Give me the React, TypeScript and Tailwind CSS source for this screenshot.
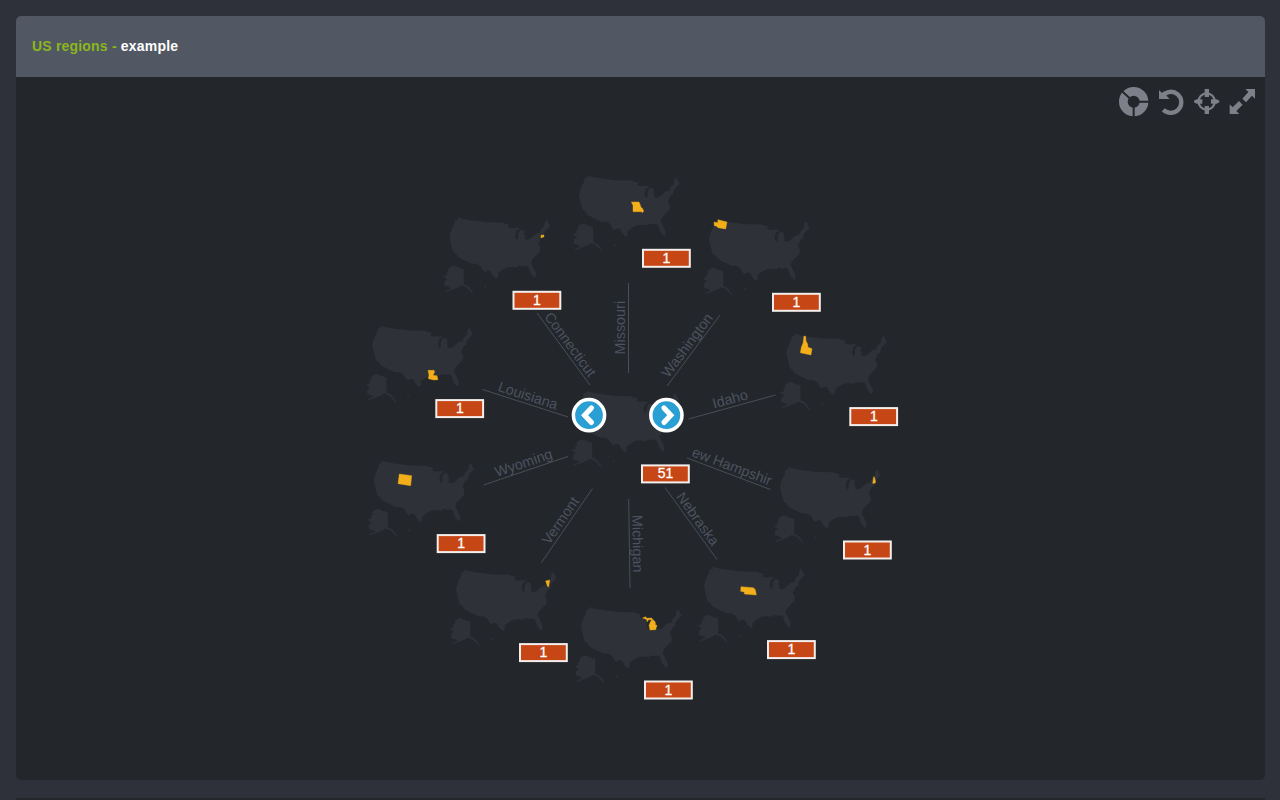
import React from "react";

type Region = {
  name: string;
  label: string;
  dx: number;
  dy: number;
  line: [number, number, number, number];
  shape: string;
  origin: [number, number];
};

const LAND =
  "M84,32 L86,33 L90,36 L120,42 L170,48 L218,49 L222,52 L238,55 L232,62 L242,66 L251,65 L264,65 L270,67 L260,73 L256,82 L256,94 L260,101 L264,97 L264,82 L269,73 L277,70 L284,77 L281,86 L285,88 L283,98 L291,101 L300,98 L308,90 L318,82 L329,80 L333,68 L342,61 L344,47 L348,41 L353,43 L355,53 L361,57 L353,66 L344,75 L341,84 L341,90 L332,95 L329,104 L324,112 L330,121 L330,136 L318,148 L307,160 L303,171 L311,187 L318,202 L317,213 L313,215 L304,206 L299,196 L296,184 L288,179 L276,181 L267,178 L262,184 L246,182 L232,183 L217,191 L205,200 L203,216 L196,216 L187,206 L181,194 L172,193 L165,198 L158,192 L151,179 L140,173 L125,173 L98,160 L83,152 L78,143 L69,137 L64,118 L58,93 L62,75 L72,55 L76,39 L83,42 Z";
const ALASKA =
  "M51,186 L60,179 L70,176 L79,181 L98,187 L98,232 L107,235 L115,242 L126,258 L124,261 L112,247 L104,240 L90,235 L82,241 L67,247 L44,256 L41,253 L60,245 L52,240 L41,237 L39,230 L42,222 L49,217 L40,212 L37,207 L48,205 L46,198 L52,194 Z M31,209 l4,-1 l1,3 z M133,221 l4,1 l-2,3 z M146,226 l5,2 l-3,2 z M161,235 l4,4 l-1,6 l-4,-2 z";

const REGIONS: Region[] = [
  { name: "Missouri", label: "Missouri", dx: 0, dy: 0, line: [628.5, 373, 628.5, 283], origin: [560, 165], shape: "M214,111 L237,111 L240,118 L243,127 L248,131 L251,138 L247,143 L244,140 L219,140 L219,121 Z" },
  { name: "Washington", label: "Washington", dx: 130, dy: 44, line: [667, 386, 720, 315], origin: [700, 210], shape: "M42,36 L53,38 L54,29 L81,36 L77,57 L54,53 L50,49 L43,47 Z" },
  { name: "Idaho", label: "Idaho", dx: 207.3, dy: 158.3, line: [688.5, 419, 775.5, 395], origin: [700, 210], shape: "M312,378 L317,379 L318,393 L323,402 L324,412 L336,416 L333,435 L301,428 L304,412 L309,400 Z" },
  { name: "New Hampshire", label: "ew Hampshir", dx: 201, dy: 291.7, line: [687, 458, 770.5, 489.5], origin: [660, 430], shape: "M641,140 L643,141 L647,155 L645,160 L638,160 Z" },
  { name: "Nebraska", label: "Nebraska", dx: 125, dy: 391.3, line: [665, 487.5, 717, 559.5], origin: [660, 430], shape: "M243,470 L280,473 L286,479 L289,495 L253,492 L253,486 L242,484 Z" },
  { name: "Michigan", label: "Michigan", dx: 2, dy: 431.7, line: [628.7, 499, 630, 588], origin: [560, 480], shape: "M248,414 L257,410 L260,415 L275,414 L279,419 L266,419 L262,425 L259,418 Z M274,420 L281,421 L286,427 L286,434 L291,436 L287,449 L270,450 L267,436 Z" },
  { name: "Vermont", label: "Vermont", dx: -123, dy: 394.3, line: [541.5, 562.5, 592.5, 488.5], origin: [360, 440], shape: "M557,423 L569,420 L566,441 L562,438 Z" },
  { name: "Wyoming", label: "Wyoming", dx: -205.3, dy: 285.3, line: [483.5, 485, 568, 456.5], origin: [360, 440], shape: "M118,102 L155,107 L152,137 L114,131 Z" },
  { name: "Louisiana", label: "Louisiana", dx: -206.7, dy: 150.3, line: [482.5, 389.5, 568, 417], origin: [360, 310], shape: "M204,181 L222,181 L224,185 L219,196 L231,197 L234,209 L222,210 L205,206 L207,195 Z" },
  { name: "Connecticut", label: "Connecticut", dx: -129.5, dy: 42, line: [537, 313, 590, 385], origin: [430, 210], shape: "M333,76 L342,75 L342,80 L333,84 Z" },
];

function UsMap({ dx, dy }: { dx: number; dy: number }) {
  return (
    <g transform={`translate(${559.6 + dx} ${164.2 + dy}) scale(0.33333)`} className="fill-[#2f3139]">
      <path d={LAND} />
      <path d={ALASKA} transform="translate(3 2)" />
    </g>
  );
}

function Badge({ dx, dy, value }: { dx: number; dy: number; value: number }) {
  const x = 642 + dx;
  const y = 248.8 + dy;
  return (
    <g>
      <rect x={x + 1} y={y + 1} width={46.8} height={17} strokeWidth={2} className="fill-[#c64615] stroke-[#f4efec]" />
      <text x={x + 24.5} y={y + 14} textAnchor="middle" strokeWidth={0.3} className="fill-white stroke-white text-[14px]">
        {value}
      </text>
    </g>
  );
}

function Spoke({ region }: { region: Region }) {
  const [x1, y1, x2, y2] = region.line;
  const angle = (Math.atan2(y2 - y1, x2 - x1) * 180) / Math.PI;
  return (
    <g>
      <line x1={x1} y1={y1} x2={x2} y2={y2} className="stroke-[#4b4e57]" />
      <text
        transform={`translate(${(x1 + x2) / 2} ${(y1 + y2) / 2}) rotate(${angle})`}
        x={0.3}
        y={-3.3}
        textAnchor="middle"
        className="fill-[#4d525f] text-[14.4px]"
      >
        {region.label}
      </text>
    </g>
  );
}

function ArrowButton({ cx, flip }: { cx: number; flip?: boolean }) {
  return (
    <g transform={`translate(${cx} 415.2) scale(${flip ? -1 : 1} 1)`}>
      <circle r={15.6} strokeWidth={3.5} className="fill-[#2a9fd4] stroke-white" />
      <path d="M2.4,-7.2 L-4.4,0 L2.4,7.2" fill="none" strokeWidth={5.2} strokeLinecap="round" className="stroke-white" />
    </g>
  );
}

function Toolbar() {
  return (
    <svg width={140} height={34} viewBox="1118 84 140 34" className="absolute right-[7px] top-[7px] fill-[#7d8088] stroke-[#7d8088]">
      <g transform="translate(1100 70) scale(0.33333)">
        <circle cx={101} cy={95} r={31} fill="none" strokeWidth={26} />
        <path d="M101,95 H148 M101,95 V142 M101,95 L66,64" strokeWidth={6} className="stroke-[#23262b]" />
        <path d="M188,77 A31.5,31.5 0 1 1 190,119" fill="none" strokeWidth={13} />
        <path d="M177,60 L186,69 L192,64 L201,79 L209,87 H177 Z" stroke="none" />
        <circle cx={320} cy={94.5} r={24.5} fill="none" strokeWidth={6.5} />
        <path d="M314,57 h13 v24 h-13 Z M314,108 h13 v24 h-13 Z M282,92 L290,88 H307 V101 H290 L282,97 Z M358,92 L350,88 H333 V101 H350 L358,97 Z" stroke="none" />
        <path d="M436,57 H465 V86 L456,77 L438,97 L427,86 L445,66 Z M417,93 L428,104 L409,123 L418,132 H389 V103 L398,112 Z" stroke="none" />
      </g>
    </svg>
  );
}

export default function App() {
  return (
    <div className="flex h-[800px] w-[1280px] flex-col overflow-hidden bg-[#2f313a] pl-4 pr-[15px] pt-4 font-['Liberation_Sans',Arial,sans-serif]">
      <section className="flex h-[764px] shrink-0 flex-col overflow-hidden rounded-[5px] bg-[#23262b]">
        <header className="flex h-[61px] shrink-0 items-center bg-[#525863] px-4 pb-0.5 text-[14px] font-bold leading-5 tracking-[0.19px] text-white">
          <h1>
            <span className="text-[#8ab71b]">US regions - </span>example
          </h1>
        </header>
        <div className="relative flex-1">
          <svg width={1249} height={703} viewBox="16 77 1249 703" className="block">
            {REGIONS.map((r) => (
              <g key={r.name}>
                <UsMap dx={r.dx} dy={r.dy} />
                <path
                  d={r.shape}
                  transform={`translate(${r.origin[0]} ${r.origin[1]}) scale(0.33333)`}
                  strokeWidth={1.2}
                  className="fill-[#f2af19] stroke-[#f2af19]"
                />
                <Badge dx={r.dx} dy={r.dy} value={1} />
                <Spoke region={r} />
              </g>
            ))}
            <UsMap dx={-1} dy={215.6} />
            <Badge dx={-1} dy={215.6} value={51} />
            <ArrowButton cx={589} />
            <ArrowButton cx={666.4} flip />
          </svg>
          <Toolbar />
        </div>
      </section>
      <div className="mt-[18px] h-[2px] shrink-0 bg-[#23262b]" />
    </div>
  );
}
